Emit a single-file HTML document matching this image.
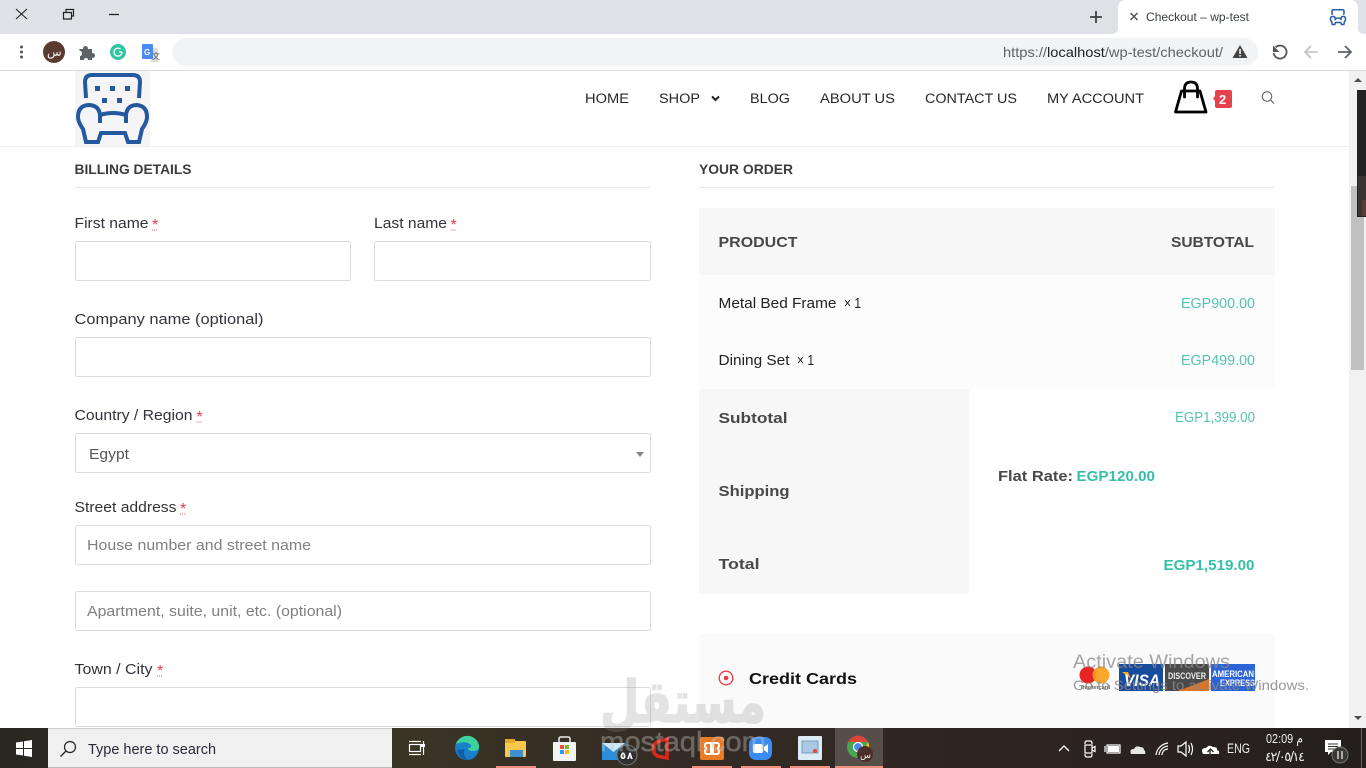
<!DOCTYPE html>
<html lang="en"><head><meta charset="utf-8"><title>Checkout – wp-test</title>
<style>
html,body{margin:0;padding:0;width:1366px;height:768px;overflow:hidden;background:#fff}
svg{display:block;position:absolute;left:0;top:0}
text{font-family:"Liberation Sans","DejaVu Sans",sans-serif;font-size:14.5px;fill:#222}
.l{font-size:15px;fill:#33333b}
.r{fill:#e2404a;font-size:16px}
.ph{font-size:15px;fill:#808080}
.nav{font-size:13.5px;fill:#262626}
.h{font-size:14px;font-weight:700;fill:#3d3d3d}
.b{font-size:15px;font-weight:700;fill:#484848}
.g{font-size:14.5px;fill:#55c3ae}
.gb{font-size:15px;font-weight:700;fill:#37bfa7}
.box{fill:#fff;stroke:#dcdcdc;stroke-width:1}
</style></head><body>
<svg width="1366" height="768" viewBox="0 0 1366 768" xmlns="http://www.w3.org/2000/svg">
<rect width="1366" height="768" fill="#fff"/>
<!-- tab strip -->
<rect width="1366" height="34" fill="#dee1e6"/>
<path d="M16 9l11 10M27 9L16 19" stroke="#222" stroke-width="1.100" fill="none"/>
<path d="M63.500 12.500h8v6.500h-8zM66 12V9.500h7.500V16H72" stroke="#222" stroke-width="1.200" fill="none"/>
<path d="M109 14.500h10" stroke="#222" stroke-width="1.300"/>
<path d="M1096 11v12M1090 17h12" stroke="#3c4043" stroke-width="1.800"/>
<path d="M1110 34c6 0 8-2 8-6V8c0-5 3-8 8-8h224c5 0 8 3 8 8v20c0 4 2 6 8 6z" fill="#fff"/>
<path d="M1130.500 13l7 7M1137.500 13l-7 7" stroke="#555" stroke-width="1.500"/>
<text x="1146" y="21" style="font-size:12px;fill:#3c4043" textLength="103" lengthAdjust="spacingAndGlyphs">Checkout – wp-test</text>
<g transform="translate(1338 17) scale(.22) translate(-112.500 -108)" fill="none" stroke="#2a5da8" stroke-width="7">
<path d="M86 98l-1-16q0-7 7-7h41q7 0 7 7l-1 16"/>
<path d="M100 123V115Q99 105 88 105Q78 106 78 117Q78 122 83 129L86 142H98L101 133H125L128 142H139L142 129Q147 122 147 117Q147 106 137 105Q127 105 126 115V123M100 115Q113 111 126 115"/>
</g>
<!-- toolbar -->
<rect y="34" width="1366" height="36" fill="#fff"/>
<rect y="70" width="1366" height="1" fill="#dcdcdc"/>
<g fill="#555"><circle cx="21.500" cy="47" r="1.500"/><circle cx="21.500" cy="52" r="1.500"/><circle cx="21.500" cy="57" r="1.500"/></g>
<circle cx="54" cy="52" r="11" fill="#5b3a30"/>
<text x="47" y="56" style="font-size:12px;fill:#eee;font-family:'DejaVu Sans',sans-serif" textLength="14">س</text>
<path d="M79 49h4q0-3 2.500-3T88 49h4v4q3 0 3 2.500T92 58v2h-4q0-2-2-2t-2 2h-4v-4q2 0 2-2.500T80 51z" fill="#5f6368"/>
<circle cx="118" cy="52" r="8" fill="#31c4a5"/>
<path d="M122 52a4 4 0 1 1-1.500-3M119 52h3" stroke="#fff" stroke-width="1.300" fill="none"/>
<path d="M150 48h8v14h-7z" fill="#ddd"/>
<rect x="142" y="44" width="11" height="15" rx="1" fill="#4c8bf5"/>
<text x="144" y="55" style="font-size:8px;font-weight:700;fill:#fff">G</text>
<text x="152" y="59" style="font-size:8px;fill:#555;font-family:'Noto Sans CJK SC',sans-serif">文</text>
<rect x="172" y="38" width="1086" height="28" rx="14" fill="#f1f3f4"/>
<text x="1003" y="57" style="font-size:14px;fill:#5f6368" textLength="220" lengthAdjust="spacingAndGlyphs">https://<tspan fill="#202124">localhost</tspan>/wp-test/checkout/</text>
<path d="M1240 45l7.500 13h-15z" fill="#444"/><rect x="1239.300" y="49" width="1.500" height="5" fill="#fff"/><rect x="1239.300" y="55" width="1.500" height="1.500" fill="#fff"/>
<path d="M1275.600 47.300A6.500 6.500 0 1 1 1273.600 53" fill="none" stroke="#555" stroke-width="1.800"/><path d="M1273 45.500v6.500h6.500z" fill="#555"/>
<path d="M1305 52h13M1311 46l-6 6 6 6" stroke="#bdc1c6" stroke-width="1.600" fill="none"/>
<path d="M1351 52h-13M1345 46l6 6-6 6" stroke="#5f6368" stroke-width="1.800" fill="none"/>
<!-- header -->
<rect x="75" y="71" width="75" height="75" fill="#f5f5f7"/>
<rect y="146" width="1349" height="1" fill="#eee"/>
<g fill="none" stroke="#24589f" stroke-width="4">
<path d="M86 98l-1-16q0-7 7-7h41q7 0 7 7l-1 16"/>
<path d="M100 123V115Q99 105 88 105Q78 106 78 117Q78 122 83 129L86 142H98L101 133H125L128 142H139L142 129Q147 122 147 117Q147 106 137 105Q127 105 126 115V123M100 115Q113 111 126 115"/>
</g>
<g fill="#24589f"><rect x="95" y="86" width="5" height="5"/><rect x="110" y="86" width="5" height="5"/><rect x="125" y="86" width="5" height="5"/><rect x="102" y="98" width="5" height="5"/><rect x="117" y="98" width="5" height="5"/></g>
<text class="nav" x="585" y="103" textLength="44" lengthAdjust="spacingAndGlyphs">HOME</text>
<text class="nav" x="659" y="103" textLength="41" lengthAdjust="spacingAndGlyphs">SHOP</text>
<path d="M712 96.500l3.500 3.500 3.500-3.500" stroke="#222" stroke-width="2" fill="none"/>
<text class="nav" x="750" y="103" textLength="40" lengthAdjust="spacingAndGlyphs">BLOG</text>
<text class="nav" x="820" y="103" textLength="75" lengthAdjust="spacingAndGlyphs">ABOUT US</text>
<text class="nav" x="925" y="103" textLength="92" lengthAdjust="spacingAndGlyphs">CONTACT US</text>
<text class="nav" x="1047" y="103" textLength="97" lengthAdjust="spacingAndGlyphs">MY ACCOUNT</text>
<g fill="none" stroke="#000" stroke-width="2.800"><path d="M1181.500 91h18.500l6 21h-30.500z" stroke-linejoin="round"/><path d="M1184.500 97V89q0-7 6.500-7t6.500 7v8" stroke-linecap="round"/></g>
<path d="M1216 95v7l-3-3.500z" fill="#e8414e"/>
<rect x="1215" y="90" width="17" height="18" rx="2" fill="#e8414e"/>
<text x="1219" y="104" style="font-size:13px;font-weight:700;fill:#fff">2</text>
<circle cx="1267" cy="96.500" r="4.800" fill="none" stroke="#555" stroke-width="1"/><path d="M1270.500 100l3.500 3.500" stroke="#555" stroke-width="1"/>
<!-- left column -->
<text class="h" x="74.500" y="174" textLength="117" lengthAdjust="spacingAndGlyphs">BILLING DETAILS</text>
<rect x="75" y="187" width="576" height="1" fill="#e8e8e8"/>
<text class="l" x="74.500" y="228" textLength="74" lengthAdjust="spacingAndGlyphs">First name</text><text class="r" x="152" y="230">*</text><path d="M152 230h6" stroke="#c33" stroke-width=".8" stroke-dasharray="1 1"/>
<text class="l" x="374" y="228" textLength="73" lengthAdjust="spacingAndGlyphs">Last name</text><text class="r" x="450.500" y="230">*</text><path d="M450.500 230h6" stroke="#c33" stroke-width=".8" stroke-dasharray="1 1"/>
<rect class="box" x="75.500" y="241.500" width="275" height="39" rx="2"/>
<rect class="box" x="374.500" y="241.500" width="276" height="39" rx="2"/>
<text class="l" x="74.500" y="324" textLength="189" lengthAdjust="spacingAndGlyphs">Company name (optional)</text>
<rect class="box" x="75.500" y="337.500" width="575" height="39" rx="2"/>
<text class="l" x="74.500" y="420" textLength="118" lengthAdjust="spacingAndGlyphs">Country / Region</text><text class="r" x="196.500" y="422">*</text><path d="M196.500 422h6" stroke="#c33" stroke-width=".8" stroke-dasharray="1 1"/>
<rect class="box" x="75.500" y="433.500" width="575" height="39" rx="2"/>
<text x="89" y="459" style="font-size:15px;fill:#555" textLength="40" lengthAdjust="spacingAndGlyphs">Egypt</text>
<path d="M636 452h8l-4 5z" fill="#888"/>
<text class="l" x="74.500" y="512" textLength="102" lengthAdjust="spacingAndGlyphs">Street address</text><text class="r" x="180" y="514">*</text><path d="M180 514h6" stroke="#c33" stroke-width=".8" stroke-dasharray="1 1"/>
<rect class="box" x="75.500" y="525.500" width="575" height="39" rx="2"/>
<text class="ph" x="87" y="550" textLength="224" lengthAdjust="spacingAndGlyphs">House number and street name</text>
<rect class="box" x="75.500" y="591.500" width="575" height="39" rx="2"/>
<text class="ph" x="87" y="616" textLength="255" lengthAdjust="spacingAndGlyphs">Apartment, suite, unit, etc. (optional)</text>
<text class="l" x="74.500" y="674" textLength="78" lengthAdjust="spacingAndGlyphs">Town / City</text><text class="r" x="157" y="676">*</text><path d="M157 676h6" stroke="#c33" stroke-width=".8" stroke-dasharray="1 1"/>
<rect class="box" x="75.500" y="687.500" width="575" height="39" rx="2"/>
<!-- right column -->
<text class="h" x="699" y="174" textLength="94" lengthAdjust="spacingAndGlyphs">YOUR ORDER</text>
<rect x="699" y="187" width="576" height="1" fill="#e8e8e8"/>
<rect x="699" y="208" width="576" height="67" fill="#f7f7f7"/>
<rect x="699" y="275" width="576" height="114" fill="#fcfcfc"/>
<text class="b" x="718.500" y="247" textLength="79" lengthAdjust="spacingAndGlyphs">PRODUCT</text>
<text class="b" x="1171" y="247" textLength="83" lengthAdjust="spacingAndGlyphs">SUBTOTAL</text>
<text x="718.500" y="308" style="font-size:14.500px;fill:#222" textLength="118" lengthAdjust="spacingAndGlyphs">Metal Bed Frame</text>
<text x="844" y="308" style="font-size:14.500px;fill:#222" textLength="17" lengthAdjust="spacingAndGlyphs">× 1</text>
<text class="g" x="1181" y="308" textLength="74" lengthAdjust="spacingAndGlyphs">EGP900.00</text>
<text x="718.500" y="365" style="font-size:14.500px;fill:#222" textLength="71" lengthAdjust="spacingAndGlyphs">Dining Set</text>
<text x="797" y="365" style="font-size:14.500px;fill:#222" textLength="17" lengthAdjust="spacingAndGlyphs">× 1</text>
<text class="g" x="1181" y="365" textLength="74" lengthAdjust="spacingAndGlyphs">EGP499.00</text>
<rect x="699" y="389" width="270" height="205" fill="#f7f7f7"/>
<rect x="969" y="389" width="306" height="205" fill="#fff"/>
<text class="b" x="718.500" y="423" textLength="69" lengthAdjust="spacingAndGlyphs">Subtotal</text>
<text class="g" x="1175" y="422" textLength="80" lengthAdjust="spacingAndGlyphs">EGP1,399.00</text>
<text class="b" x="718.500" y="496" textLength="71" lengthAdjust="spacingAndGlyphs">Shipping</text>
<text class="b" x="998" y="481" textLength="75" lengthAdjust="spacingAndGlyphs">Flat Rate:</text>
<text class="gb" x="1076.500" y="481" textLength="78.500" lengthAdjust="spacingAndGlyphs">EGP120.00</text>
<text class="b" x="718.500" y="569" textLength="41" lengthAdjust="spacingAndGlyphs">Total</text>
<text class="gb" x="1163.500" y="570" textLength="91" lengthAdjust="spacingAndGlyphs">EGP1,519.00</text>
<rect x="699" y="634" width="576" height="94" fill="#fafafa"/>
<circle cx="726" cy="678" r="6.800" fill="none" stroke="#e8414e" stroke-width="1.400"/><circle cx="726" cy="678" r="2.300" fill="#e8414e"/>
<text x="749" y="684" style="font-size:16px;font-weight:700;fill:#111" textLength="108" lengthAdjust="spacingAndGlyphs">Credit Cards</text>
<!-- cards -->
<circle cx="1088" cy="675" r="8.500" fill="#e52423"/><circle cx="1101" cy="675" r="8.500" fill="#f9a11b" opacity=".92"/>
<text x="1081" y="689" style="font-size:5px;fill:#333" textLength="29" lengthAdjust="spacingAndGlyphs">mastercard</text>
<rect x="1119" y="664" width="44" height="27" fill="#174b9c"/>
<path d="M1122 672h6l3 7z" fill="#f7a823"/>
<text x="1124" y="686" style="font-size:17px;font-weight:700;font-style:italic;fill:#fff" textLength="36" lengthAdjust="spacingAndGlyphs">VISA</text>
<rect x="1165" y="664" width="44" height="27" fill="#4a4a4a"/>
<path d="M1178 691l31-12v12z" fill="#e9711c"/>
<text x="1168" y="679" style="font-size:9.500px;font-weight:700;fill:#eee" textLength="38" lengthAdjust="spacingAndGlyphs">DISCOVER</text>
<rect x="1211" y="664" width="44" height="27" fill="#2c63d6"/>
<text x="1212" y="677" style="font-size:9.500px;font-weight:700;fill:#fff" textLength="42" lengthAdjust="spacingAndGlyphs">AMERICAN</text>
<text x="1220" y="686" style="font-size:9px;font-weight:700;fill:#fff" textLength="35" lengthAdjust="spacingAndGlyphs">EXPRESS</text>
<!-- scrollbar -->
<rect x="1349" y="71" width="17" height="657" fill="#f1f1f1"/>
<path d="M1354 82h8l-4-4z" fill="#505050"/>
<path d="M1354 716h8l-4 4z" fill="#505050"/>
<rect x="1351" y="186" width="13" height="184" fill="#c1c1c1"/>
<rect x="1357" y="90" width="9" height="127" fill="#222"/>
<rect x="1358" y="176" width="8" height="40" fill="#3a3532"/>
<rect x="1362" y="200" width="4" height="16" fill="#5b3a30"/>
<!-- activate windows -->
<text x="1073" y="668" style="font-size:19px;fill:#888;opacity:.75" textLength="157" lengthAdjust="spacingAndGlyphs">Activate Windows</text>
<text x="1073" y="690" style="font-size:14px;fill:#888;opacity:.85" textLength="236" lengthAdjust="spacingAndGlyphs">Go to Settings to activate Windows.</text>
<!-- taskbar -->
<defs><linearGradient id="tb" x1="0" x2="1" y1="0" y2="0"><stop offset="0" stop-color="#282820"/><stop offset=".3" stop-color="#393426"/><stop offset=".65" stop-color="#302622"/><stop offset="1" stop-color="#241f1e"/></linearGradient></defs>
<rect y="728" width="1366" height="40" fill="url(#tb)"/>
<g fill="#fff"><path d="M16 742.500l7-1v6.500h-7zM24 741.300l8-1.300v8h-8zM16 749h7v6.500l-7-1zM24 749h8v8l-8-1.200z"/></g>
<rect x="48" y="728" width="344" height="40" fill="#f0f0f0"/>
<rect x="48" y="728" width="344" height="1" fill="#cfcfcf"/><rect x="48" y="767" width="344" height="1" fill="#bbb"/>
<circle cx="70" cy="747" r="5.500" fill="none" stroke="#222" stroke-width="1.200"/><path d="M66 751l-5.500 5.500" stroke="#222" stroke-width="1.300"/>
<text x="88" y="754" style="font-size:15px;fill:#2a2a3a" textLength="128" lengthAdjust="spacingAndGlyphs">Type here to search</text>
<g fill="none" stroke="#fff" stroke-width="1.200"><path d="M409 741.500h12M409 754.500h12"/><rect x="409.500" y="744.500" width="11" height="7"/><path d="M423.500 741v14"/></g>
<rect x="421" y="744" width="4" height="3" fill="#fff"/>
<circle cx="467" cy="748" r="12" fill="#1b7fc9"/><path d="M456 744a12 12 0 0 1 23 1q1 6-6 6-5 0-5-3 4 0 3-3-5-5-15-1z" fill="#3dd29a"/><path d="M457 750q2 9 11 10-6-5-3-11z" fill="#105fa8"/>
<rect x="505" y="741" width="21" height="16" rx="1" fill="#f7c84a"/><rect x="505" y="739" width="10" height="4" fill="#e3a92d"/><rect x="510" y="750" width="13" height="7" fill="#3e8ed0"/>
<rect x="553" y="742" width="23" height="19" rx="1" fill="#f3f3f3"/><path d="M559 742v-3q0-2 2-2h7q2 0 2 2v3" stroke="#eee" stroke-width="1.500" fill="none"/>
<rect x="560" y="745" width="4" height="4" fill="#e5532d"/><rect x="565" y="745" width="4" height="4" fill="#7cb82f"/><rect x="560" y="750" width="4" height="4" fill="#2a9be8"/><rect x="565" y="750" width="4" height="4" fill="#f8b60f"/>
<rect x="602" y="743" width="23" height="17" fill="#2a8fd8"/><path d="M602 743l11.500 9 11.500-9" fill="#cfe8f8"/>
<circle cx="627" cy="755" r="10" fill="#30302e" stroke="#777" stroke-width="1"/>
<text x="620" y="759" style="font-size:10px;font-weight:700;fill:#fff;font-family:'DejaVu Sans',sans-serif" textLength="13">٥٨</text>
<path d="M657 742l10-3v19l-10-2-3-3v-8z" fill="none" stroke="#d8281a" stroke-width="3.500"/>
<rect x="700" y="737" width="24" height="23" rx="2" fill="#ea7b25"/>
<path d="M711 743h-4q-2 0-2 2.500t2 3q-2 .5-2 3t2 2.500h4V743zM713 743h4q2 0 2 2.500t-2 3q2 .5 2 3t-2 2.500h-4V743z" fill="none" stroke="#fff" stroke-width="2"/>
<rect x="749" y="737" width="23" height="23" rx="7" fill="#3a8cf0"/><rect x="753" y="744" width="10" height="9" rx="2" fill="#fff"/><path d="M764 747l4-3v9l-4-3z" fill="#fff"/>
<rect x="798" y="736" width="24" height="24" rx="1" fill="#dcecf7"/><rect x="802" y="741" width="16" height="12" fill="#a9c8e2" stroke="#6b8cad" stroke-width=".8"/><circle cx="815" cy="751" r="2" fill="#e0483a"/>
<rect x="835" y="728" width="48" height="40" fill="#564e48"/>
<circle cx="858" cy="747" r="11" fill="#4aa451"/><path d="M848 742a11 11 0 0 1 20 0h-10z" fill="#db4437"/><path d="M868 742a11 11 0 0 1-8 16l4-8z" fill="#f4c20d"/><circle cx="858" cy="747" r="4.500" fill="#4a87e8" stroke="#fff" stroke-width="1.300"/>
<circle cx="865" cy="754" r="8" fill="#4a3029"/>
<text x="860" y="758" style="font-size:9px;fill:#eee;font-family:'DejaVu Sans',sans-serif" textLength="10">س</text>
<g fill="#f0907c"><rect x="496" y="766" width="40" height="2"/><rect x="692" y="766" width="40" height="2"/><rect x="741" y="766" width="40" height="2"/><rect x="790" y="766" width="40" height="2"/><rect x="835" y="766" width="48" height="2"/></g>
<!-- tray -->
<g fill="none" stroke="#fff" stroke-width="1.200">
<path d="M1059 751l5-5 5 5" stroke-width="1.400"/>
<path d="M1085 744v-1q0-2 2-2h3q2 0 2 2v1M1085 754v1q0 2 2 2h3q2 0 2-2v-1"/><rect x="1085" y="745" width="7" height="8"/><path d="M1092 748l3-1.500v5l-3-1.500z"/>
<rect x="1107" y="745" width="13" height="8"/><path d="M1105 746v6"/>
<path d="M1156 755a14 14 0 0 1 12-12M1159 755a10 10 0 0 1 9-9M1162 755a6 6 0 0 1 6-6"/>
<path d="M1178 746h3l5-4v14l-5-4h-3zM1188.500 745q2 4 0 8M1191 743q3 6 0 12"/>
</g>
<rect x="1108" y="746" width="11" height="6" fill="#fff"/>
<path d="M1131 754q-2-5 3-5 2-4 6-2 4 0 4 3 2 1 1 4z" fill="#e6e6e6"/>
<path d="M1203 754q-3-6 3-6 3-4 7-1 5 0 4 3 3 1 2 4z" fill="#fff"/><path d="M1210 755v-5M1207.500 752l3-3 3 3" stroke="#2a2520" stroke-width="1.300" fill="none"/>
<text x="1227" y="753" style="font-size:13.500px;fill:#eee" textLength="23" lengthAdjust="spacingAndGlyphs">ENG</text>
<text x="1266" y="743" style="font-size:13px;fill:#eee" textLength="37" lengthAdjust="spacingAndGlyphs">02:09 م</text>
<text x="1265" y="761" style="font-size:13px;fill:#eee;font-family:'DejaVu Sans',sans-serif" textLength="40">٤٢/٠٥/١٤</text>
<path d="M1325 740h16v12h-10l-3 3v-3h-3z" fill="#fff"/>
<path d="M1328 744h10M1328 746.500h10M1328 749h7" stroke="#333" stroke-width=".9"/>
<circle cx="1340" cy="755" r="8" fill="#3a3835" stroke="#777"/>
<path d="M1338 751v8M1342 751v8" stroke="#ddd" stroke-width="1.400"/>
<rect x="1361" y="728" width="1" height="40" fill="#666"/>
<!-- watermark -->
<g opacity=".24">
<text x="600" y="722" style="font-family:'DejaVu Sans',sans-serif;font-size:58px;font-weight:700;fill:#8c8c8c;stroke:#8c8c8c;stroke-width:1.500" textLength="166" lengthAdjust="spacingAndGlyphs">مستقل</text>
</g>
<text x="600" y="751" style="font-size:28px;fill:#c8c8c8;opacity:.38;stroke:#c8c8c8;stroke-width:.5" textLength="166" lengthAdjust="spacingAndGlyphs">mostaql.com</text>
</svg>
</body></html>
